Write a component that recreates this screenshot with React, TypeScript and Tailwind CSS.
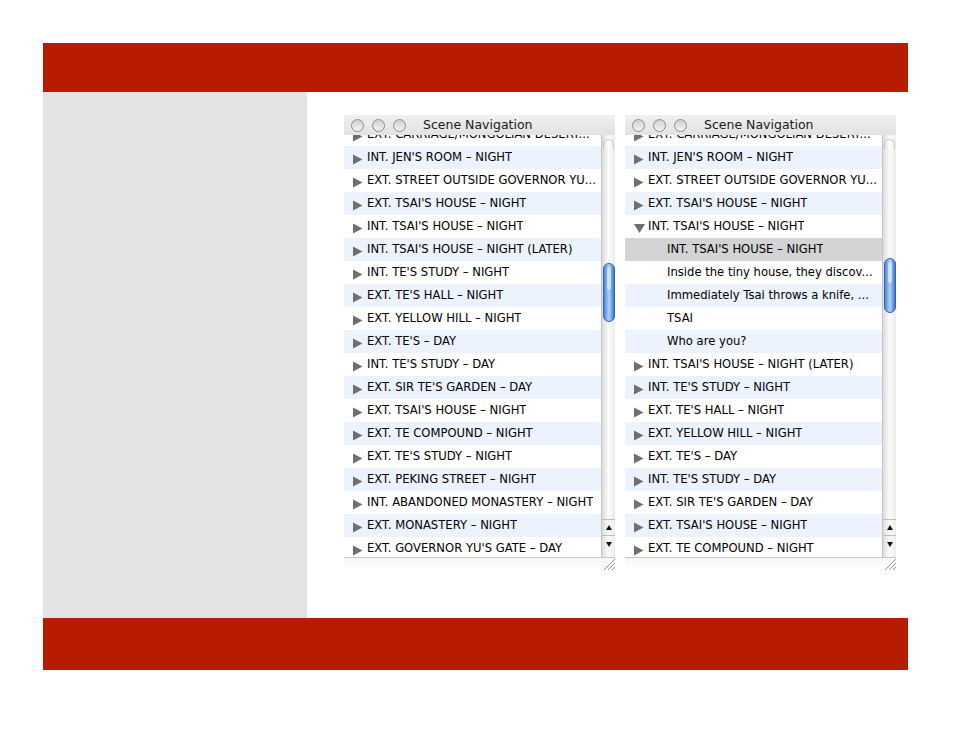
import React from 'react'

type Row = {
  label: string
  kind?: 'closed' | 'open' | 'child'
  selected?: boolean
}

const LEFT_ROWS: Row[] = [
  { label: 'EXT. CARRIAGE/MONGOLIAN DESERT...' },
  { label: "INT. JEN'S ROOM – NIGHT" },
  { label: 'EXT. STREET OUTSIDE GOVERNOR YU...' },
  { label: "EXT. TSAI'S HOUSE – NIGHT" },
  { label: "INT. TSAI'S HOUSE – NIGHT" },
  { label: "INT. TSAI'S HOUSE – NIGHT (LATER)" },
  { label: "INT. TE'S STUDY – NIGHT" },
  { label: "EXT. TE'S HALL – NIGHT" },
  { label: 'EXT. YELLOW HILL – NIGHT' },
  { label: "EXT. TE'S – DAY" },
  { label: "INT. TE'S STUDY – DAY" },
  { label: "EXT. SIR TE'S GARDEN – DAY" },
  { label: "EXT. TSAI'S HOUSE – NIGHT" },
  { label: 'EXT. TE COMPOUND – NIGHT' },
  { label: "EXT. TE'S STUDY – NIGHT" },
  { label: 'EXT. PEKING STREET – NIGHT' },
  { label: 'INT. ABANDONED MONASTERY – NIGHT' },
  { label: 'EXT. MONASTERY – NIGHT' },
  { label: "EXT. GOVERNOR YU'S GATE – DAY" },
]

const RIGHT_ROWS: Row[] = [
  { label: 'EXT. CARRIAGE/MONGOLIAN DESERT...' },
  { label: "INT. JEN'S ROOM – NIGHT" },
  { label: 'EXT. STREET OUTSIDE GOVERNOR YU...' },
  { label: "EXT. TSAI'S HOUSE – NIGHT" },
  { label: "INT. TSAI'S HOUSE – NIGHT", kind: 'open' },
  { label: "INT. TSAI'S HOUSE – NIGHT", kind: 'child', selected: true },
  { label: 'Inside the tiny house, they discov...', kind: 'child' },
  { label: 'Immediately Tsai throws a knife, ...', kind: 'child' },
  { label: 'TSAI', kind: 'child' },
  { label: 'Who are you?', kind: 'child' },
  { label: "INT. TSAI'S HOUSE – NIGHT (LATER)" },
  { label: "INT. TE'S STUDY – NIGHT" },
  { label: "EXT. TE'S HALL – NIGHT" },
  { label: 'EXT. YELLOW HILL – NIGHT' },
  { label: "EXT. TE'S – DAY" },
  { label: "INT. TE'S STUDY – DAY" },
  { label: "EXT. SIR TE'S GARDEN – DAY" },
  { label: "EXT. TSAI'S HOUSE – NIGHT" },
  { label: 'EXT. TE COMPOUND – NIGHT' },
]

function Disclosure({ open }: { open?: boolean }) {
  if (open) {
    return (
      <svg width="11" height="10" viewBox="0 0 11 10" className="mt-[3px]">
        <path d="M0 1 L11 1 L5.5 10 Z" fill="#6f6f6f" />
      </svg>
    )
  }
  return (
    <svg width="10" height="11" viewBox="0 0 10 11" className="mt-[3px]">
      <path d="M0 0.5 L9.5 5.5 L0 10.5 Z" fill="#6f6f6f" />
    </svg>
  )
}

function OutlineRow({ row, index }: { row: Row; index: number }) {
  const stripe = index % 2 === 1 ? 'bg-[#edf3fe]' : 'bg-white'
  const bg = row.selected ? 'bg-[#d4d4d4]' : stripe

  if (row.kind === 'child') {
    return (
      <div className={`flex h-[23px] items-center pl-[42px] ${bg}`}>
        <span className="truncate">{row.label}</span>
      </div>
    )
  }

  return (
    <div className={`flex h-[23px] items-center pl-[9px] ${bg}`}>
      <span className="flex w-[14px] shrink-0 items-center">
        <Disclosure open={row.kind === 'open'} />
      </span>
      <span className="truncate">{row.label}</span>
    </div>
  )
}

function Light() {
  return (
    <span className="h-[13px] w-[13px] rounded-full border border-[#8c8c8c] bg-gradient-to-b from-[#d0d0d0] to-[#f4f4f4]" />
  )
}

function Scrollbar({ thumbTop, thumbHeight }: { thumbTop: number; thumbHeight: number }) {
  return (
    <div className="flex w-[14px] flex-col border-l border-[#c4c4c4] bg-gradient-to-r from-[#dcdcdc] via-[#fbfbfb] to-[#ececec]">
      <div className="mx-auto mt-[4px] h-[10px] w-[11px] rounded-t-full border-x border-t border-[#c8c8c8] bg-gradient-to-r from-[#e4e4e4] via-white to-[#eeeeee]" />
      <div
        className="mx-auto w-[12px] rounded-full border border-[#2f64b5] bg-gradient-to-r from-[#4a86d8] via-[#b3d3f7] to-[#3b78d0]"
        style={{ marginTop: thumbTop - 14, height: thumbHeight }}
      >
        <div className="mx-auto mt-[3px] h-[40%] w-[4px] rounded-full bg-white/50" />
      </div>
      <div className="mt-auto mb-[5px] flex flex-col border-t border-[#bdbdbd]">
        <div className="flex h-[16px] items-center justify-center border-b border-[#bdbdbd]">
          <svg width="6" height="5" viewBox="0 0 6 5">
            <path d="M3 0 L6 5 L0 5 Z" fill="#111" />
          </svg>
        </div>
        <div className="flex h-[16px] items-center justify-center">
          <svg width="6" height="5" viewBox="0 0 6 5">
            <path d="M0 0 L6 0 L3 5 Z" fill="#111" />
          </svg>
        </div>
      </div>
    </div>
  )
}

function SceneWindow({ rows, thumbTop, thumbHeight }: { rows: Row[]; thumbTop: number; thumbHeight: number }) {
  return (
    <div className="flex h-[455px] w-[271px] flex-col bg-white" style={{ fontFamily: '"DejaVu Sans", "Noto Sans", sans-serif' }}>
      <div className="relative z-10 flex h-[20px] shrink-0 items-center bg-gradient-to-b from-[#f0f0f0] to-[#e2e2e2] pl-[7px]">
        <div className="flex gap-[8px]">
          <Light />
          <Light />
          <Light />
        </div>
        <span className="ml-[17px] text-[12.5px] text-[#1a1a1a]">Scene Navigation</span>
      </div>
      <div className="flex min-h-0 flex-1">
        <div className="min-w-0 flex-1 overflow-hidden text-[11.6px] text-black">
          <div className="-mt-[12px]">
            {rows.map((r, i) => (
              <OutlineRow key={i} row={r} index={i} />
            ))}
          </div>
        </div>
        <Scrollbar thumbTop={thumbTop} thumbHeight={thumbHeight} />
      </div>
      <div className="flex h-[13px] shrink-0 justify-end border-t border-[#c6c6c6] bg-gradient-to-b from-[#f6f6f6] to-white">
        <svg width="14" height="12" viewBox="0 0 14 12">
          <path d="M3 12 L14 1 M7 12 L14 5 M11 12 L14 9" stroke="#9a9a9a" strokeWidth="1" />
        </svg>
      </div>
    </div>
  )
}

export default function App() {
  return (
    <div className="min-h-[737px] bg-white pl-[43px] pt-[43px]">
      <div className="w-[865px]">
        <div className="h-[49px] bg-[#b81c00]" />
        <div className="flex h-[526px]">
          <div className="w-[264px] bg-[#e3e3e3]" />
          <div className="flex gap-[10px] pl-[37px] pt-[23px]">
            <SceneWindow rows={LEFT_ROWS} thumbTop={128} thumbHeight={59} />
            <SceneWindow rows={RIGHT_ROWS} thumbTop={123} thumbHeight={55} />
          </div>
        </div>
        <div className="h-[52px] bg-[#b81c00]" />
      </div>
    </div>
  )
}
